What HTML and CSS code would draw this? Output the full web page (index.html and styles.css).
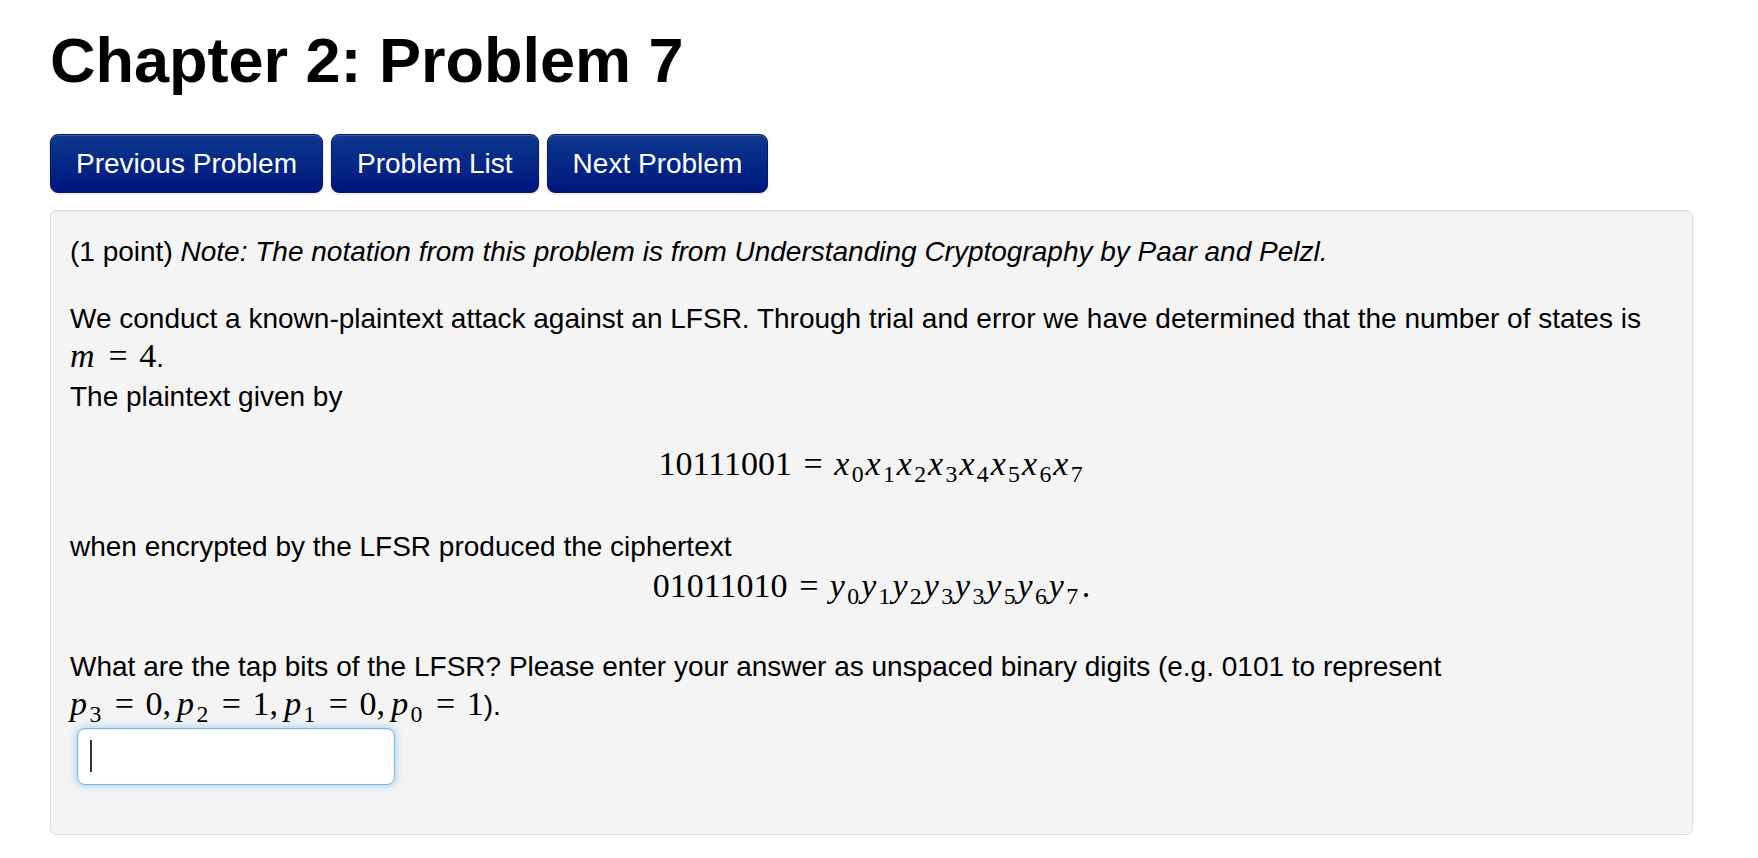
FILE: index.html
```html
<!DOCTYPE html>
<html lang="en">
<head>
    <meta charset="UTF-8">
    <title>Chapter 2: Problem 7</title>
    <link rel="stylesheet" href="styles.css">
</head>
<body>
    <div class="page">
        <h1 class="page-title">Chapter 2: Problem 7</h1>

        <div class="problem-nav">
            <a class="nav-button" href="#">Previous Problem</a>
            <a class="nav-button" href="#">Problem List</a>
            <a class="nav-button" href="#">Next Problem</a>
        </div>

        <div class="problem-content">
            <p class="problem-intro">(1 point) <em>Note: The notation from this problem is from Understanding Cryptography by Paar and Pelzl.</em></p>

            <p class="problem-text">We conduct a known-plaintext attack against an LFSR. Through trial and error we have determined that the number of states is <span class="math"><var>m</var><span class="rel">=</span>4</span>.<br>The plaintext given by</p>

            <div class="math-display">
                <span class="math"><span class="mn">10111001</span><span class="rel">=</span><var>x</var><sub>0</sub><var>x</var><sub>1</sub><var>x</var><sub>2</sub><var>x</var><sub>3</sub><var>x</var><sub>4</sub><var>x</var><sub>5</sub><var>x</var><sub>6</sub><var>x</var><sub>7</sub></span>
            </div>

            <p class="problem-text">when encrypted by the LFSR produced the ciphertext</p>

            <div class="math-display tight">
                <span class="math"><span class="mn">01011010</span><span class="rel">=</span><var>y</var><sub>0</sub><var>y</var><sub>1</sub><var>y</var><sub>2</sub><var>y</var><sub>3</sub><var>y</var><sub>3</sub><var>y</var><sub>5</sub><var>y</var><sub>6</sub><var>y</var><sub>7</sub><span class="punct">.</span></span>
            </div>

            <p class="problem-text question">What are the tap bits of the LFSR? Please enter your answer as unspaced binary digits (e.g. 0101 to represent <span class="math"><var>p</var><sub>3</sub><span class="rel">=</span>0<span class="comma">,</span><var>p</var><sub>2</sub><span class="rel">=</span>1<span class="comma">,</span><var>p</var><sub>1</sub><span class="rel">=</span>0<span class="comma">,</span><var>p</var><sub>0</sub><span class="rel">=</span>1</span>).</p>

            <div class="answer">
                <input class="answer-input" type="text" aria-label="answer">
                <span class="caret"></span>
            </div>
        </div>
    </div>
</body>
</html>
```

FILE: styles.css
```css
/* Page */
body {
    margin: 0;
    background: #fff;
    color: #000;
    font-family: "Liberation Sans", Helvetica, Arial, sans-serif;
}

.page {
    padding: 0 65px 0 50px;
}

.page-title {
    font-size: 63px;
    line-height: 70px;
    font-weight: bold;
    margin: 25px 0 39px;
}

/* Navigation buttons */
.problem-nav {
    display: flex;
    gap: 8px;
}

.nav-button {
    display: inline-block;
    padding: 12px 25px 11px;
    font-size: 28px;
    line-height: 34px;
    color: #fff;
    text-decoration: none;
    border: 1px solid #03196f;
    border-radius: 8px;
    background: linear-gradient(#0c398d, #001680);
    box-shadow: inset 0 1px 0 rgba(255, 255, 255, 0.18), 0 1px 3px rgba(0, 0, 0, 0.12);
}

/* Problem box */
.problem-content {
    margin-top: 17px;
    padding: 21px 19px 19px;
    background: #f4f4f4;
    border: 1px solid #dedede;
    border-radius: 6px;
    box-shadow: inset 0 1px 1px rgba(0, 0, 0, 0.05);
    font-size: 28px;
    line-height: 39px;
}

.problem-intro {
    margin: 0 0 28px;
}

.problem-text {
    margin: 0;
}

.problem-text.question {
    margin-top: 39px;
}

/* Math */
.math {
    font-family: "Liberation Serif", "Times New Roman", serif;
    font-size: 34px;
    line-height: 1;
    white-space: nowrap;
}

.math var {
    font-style: italic;
    margin-right: 0.07em;
}

.math sub {
    font-size: 0.7em;
    line-height: 0;
    vertical-align: -0.28em;
    margin-right: 0.08em;
}

.math .rel {
    margin: 0 0.34em;
}

.math .comma {
    margin-right: 0.18em;
}

.math .punct {
    margin-left: 0.05em;
}

.math-display {
    margin: 28px 0 41px;
    text-align: center;
    line-height: 40px;
}

.math-display .math {
    line-height: 40px;
}

.math-display.tight {
    margin: 0;
}

/* Answer field */
.answer {
    position: relative;
    width: 318px;
    height: 57px;
    margin: 3px 0 30px 7px;
}

.answer-input {
    display: block;
    box-sizing: border-box;
    width: 318px;
    height: 57px;
    padding: 0 12px;
    font-size: 28px;
    font-family: "Liberation Sans", Helvetica, Arial, sans-serif;
    background: #fff;
    border: 1px solid #79b5e9;
    border-radius: 8px;
    outline: none;
    box-shadow: inset 0 1px 1px rgba(0, 0, 0, 0.075), 0 0 8px rgba(82, 168, 236, 0.6);
}

.caret {
    position: absolute;
    left: 13px;
    top: 12px;
    width: 2px;
    height: 32px;
    background: #333;
}
```
